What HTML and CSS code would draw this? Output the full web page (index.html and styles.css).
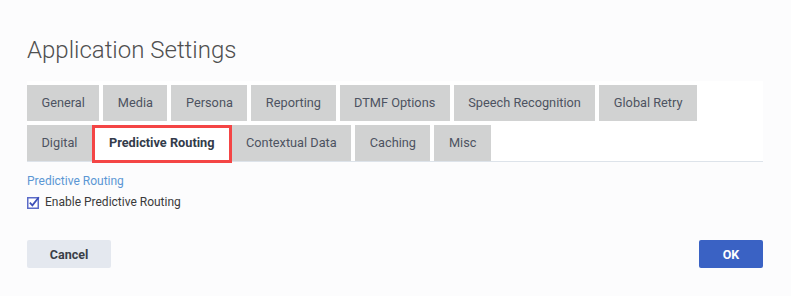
FILE: index.html
```html
<!DOCTYPE html>
<html>
<head>
<meta charset="utf-8">
<link rel="stylesheet" href="styles.css">
</head>
<body>
<div class="dialog">
  <h1 class="title">Application Settings</h1>
  <div class="tabs">
    <div class="tab-row">
      <div class="tab">General</div>
      <div class="tab">Media</div>
      <div class="tab">Persona</div>
      <div class="tab">Reporting</div>
      <div class="tab">DTMF Options</div>
      <div class="tab">Speech Recognition</div>
      <div class="tab">Global Retry</div>
    </div>
    <div class="tab-row">
      <div class="tab">Digital</div>
      <div class="tab active">Predictive Routing</div>
      <div class="tab">Contextual Data</div>
      <div class="tab">Caching</div>
      <div class="tab">Misc</div>
    </div>
  </div>
  <div class="section-label">Predictive Routing</div>
  <label class="check-row">
    <svg class="checkbox" width="14" height="13" viewBox="0 0 14 13">
      <rect x="0.75" y="1.75" width="10.5" height="10.5" fill="#ffffff" stroke="#5b6bc8" stroke-width="1.5"/>
      <path d="M2.8 6.6 L5.4 9.3 L11.8 1.2" fill="none" stroke="#3d4fb8" stroke-width="1.8"/>
    </svg>
    <span>Enable Predictive Routing</span>
  </label>
  <div class="actions">
    <button class="btn cancel">Cancel</button>
    <button class="btn ok">OK</button>
  </div>
</div>
</body>
</html>
```
FILE: styles.css
```css
html, body {
  margin: 0;
  padding: 0;
  background: #fcfcfd;
  font-family: Roboto, "Liberation Sans", sans-serif;
}
.dialog {
  width: 736px;
  padding: 36px 28px 0 27px;
}
.title {
  margin: 0 0 17px 0;
  font-size: 24px;
  line-height: 28px;
  font-weight: 300;
  color: #4f4f4f;
}
.tabs {
  background: #ffffff;
  padding-top: 4px;
  display: flex;
  flex-direction: column;
  gap: 4px;
  border-bottom: 1px solid #dde3ea;
}
.tab-row {
  display: flex;
  gap: 4px;
}
.tab {
  position: relative;
  height: 36px;
  line-height: 36px;
  padding: 0 14.5px;
  background: #d1d2d2;
  color: #4d5361;
  font-size: 12.75px;
}
.tab.active {
  background: #ffffff;
  color: #333b4a;
  font-weight: 700;
  padding: 0 13px;
}
.tab.active::after {
  content: "";
  position: absolute;
  left: -4px;
  right: -4px;
  top: 0;
  bottom: -2px;
  border: 3px solid #f44545;
}
.section-label {
  margin-top: 11px;
  font-size: 12px;
  line-height: 16px;
  color: #5b97d4;
}
.check-row {
  margin-top: 5px;
  display: flex;
  align-items: center;
  gap: 4px;
  font-size: 12px;
  line-height: 16px;
  color: #3a3a3a;
}
.checkbox {
  display: block;
}
.actions {
  margin-top: 30px;
  display: flex;
  justify-content: space-between;
}
.btn {
  height: 28px;
  border: none;
  border-radius: 2px;
  font-family: Roboto, "Liberation Sans", sans-serif;
  font-size: 12.5px;
  font-weight: 700;
  padding: 0;
}
.cancel {
  width: 84px;
  background: #e4e8ef;
  color: #3a3f48;
}
.ok {
  width: 64px;
  background: #3a62c4;
  color: #ffffff;
}
```
